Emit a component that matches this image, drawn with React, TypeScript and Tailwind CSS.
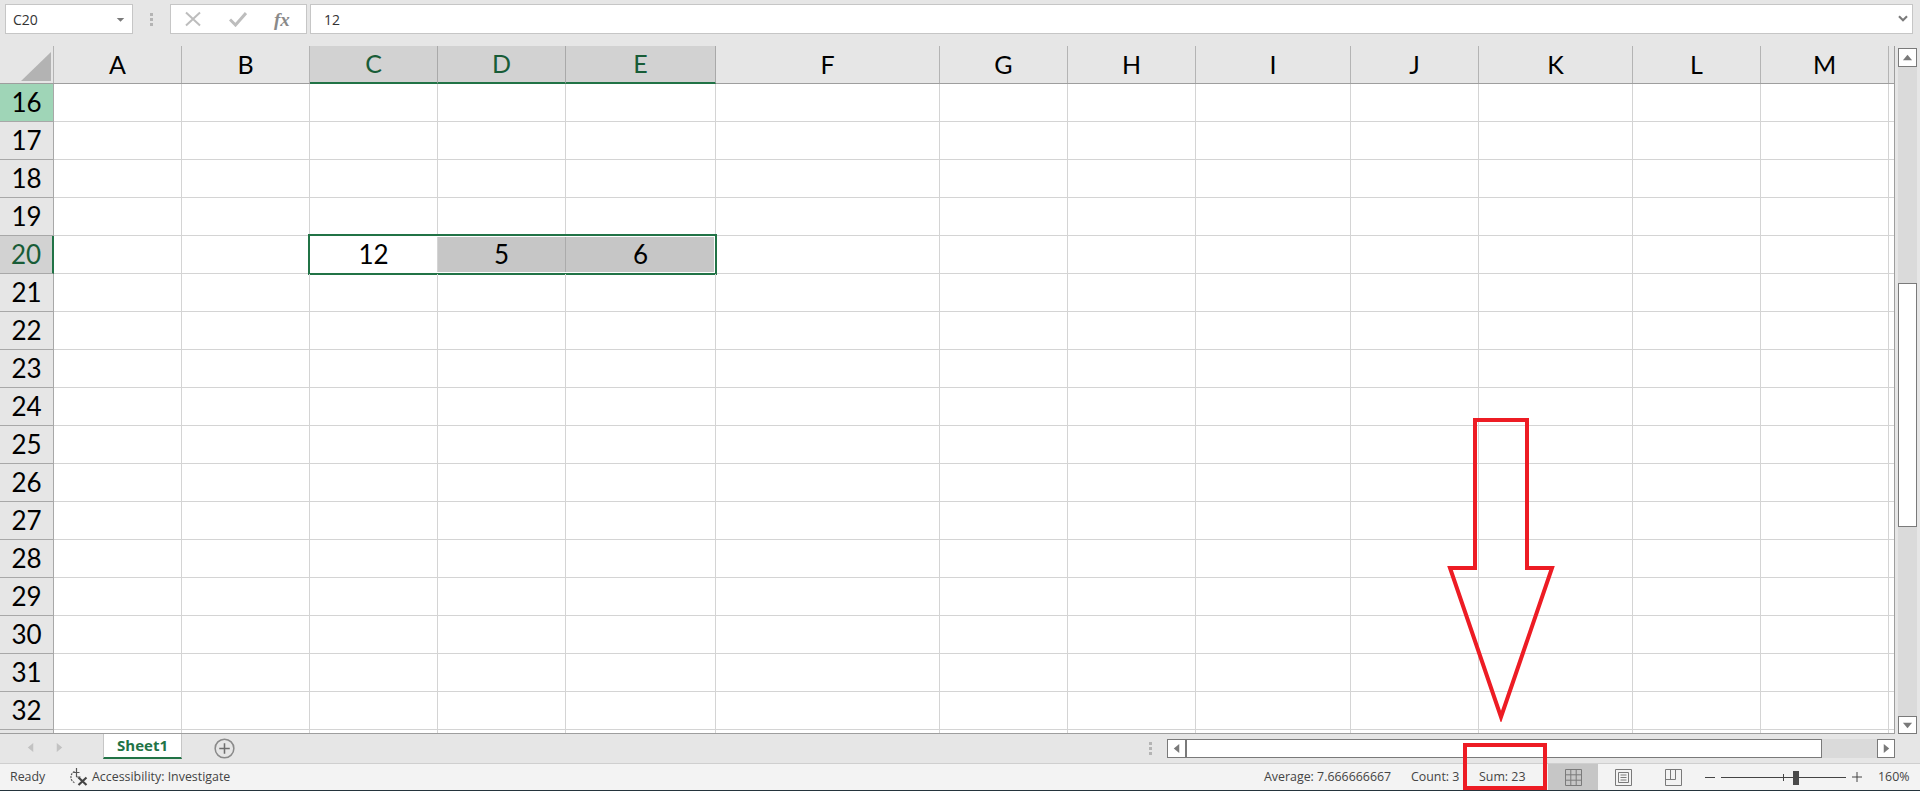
import React from "react";

const columns = [
  { name: "A", width: "w-[128px]" },
  { name: "B", width: "w-[128px]" },
  { name: "C", width: "w-[128px]", selected: true },
  { name: "D", width: "w-[128px]", selected: true },
  { name: "E", width: "w-[150px]", selected: true },
  { name: "F", width: "w-[224px]" },
  { name: "G", width: "w-[128px]" },
  { name: "H", width: "w-[128px]" },
  { name: "I", width: "w-[155px]" },
  { name: "J", width: "w-[128px]" },
  { name: "K", width: "w-[154px]" },
  { name: "L", width: "w-[128px]" },
  { name: "M", width: "w-[128px]" },
];

const rows = [16, 17, 18, 19, 20, 21, 22, 23, 24, 25, 26, 27, 28, 29, 30, 31, 32];
const values: Record<string, string> = { C: "12", D: "5", E: "6" };

function Triangle({ d, className }: { d: string; className: string }) {
  return (
    <svg viewBox="0 0 12 12" className={className}>
      <path d={d} fill="currentColor" />
    </svg>
  );
}

function Grip() {
  return (
    <div className="flex flex-col gap-[2px]">
      <span className="size-[3px] bg-[#b4b4b4]" />
      <span className="size-[3px] bg-[#b4b4b4]" />
      <span className="size-[3px] bg-[#b4b4b4]" />
    </div>
  );
}

function FormulaBar() {
  return (
    <div className="flex h-[46px] items-start pl-[5px] pr-[7px] pt-[4px]">
      <div className="flex h-[30px] w-[128px] items-center justify-between border border-[#c6c6c6] bg-white pl-[7px] pr-[7px] text-[14px] text-[#333]">
        <span>C20</span>
        <Triangle d="M1 4h10L6 9z" className="size-[9px] text-[#7a7a7a]" />
      </div>
      <div className="flex h-[30px] w-[37px] items-center justify-center">
        <Grip />
      </div>
      <div className="flex h-[30px] w-[137px] items-center border border-[#c6c6c6] bg-white pl-[14px]">
        <svg viewBox="0 0 16 16" className="size-[16px]">
          <path d="M1 1.5 15 14.5M15 1.5 1 14.5" stroke="#bdbdbd" strokeWidth="2" fill="none" />
        </svg>
        <svg viewBox="0 0 18 16" className="ml-[28px] h-[16px] w-[18px]">
          <path d="M1 8.5 6.5 14 17 2" stroke="#bdbdbd" strokeWidth="3" fill="none" />
        </svg>
        <span className="ml-[27px] font-['Liberation_Serif',serif] text-[19px] font-bold italic leading-none text-[#8a8a8a]">
          fx
        </span>
      </div>
      <div className="ml-[3px] flex h-[30px] flex-1 items-center justify-between border border-[#c6c6c6] bg-white pl-[13px] pr-[4px] text-[14px] text-[#333]">
        <span>12</span>
        <svg viewBox="0 0 12 10" className="h-[8px] w-[10px]">
          <path d="M1 1.5 6 6.5 11 1.5" stroke="#7a7a7a" strokeWidth="2.6" fill="none" />
        </svg>
      </div>
    </div>
  );
}

function ColumnHeader() {
  return (
    <div className="flex h-[38px] border-b border-[#9e9e9e] font-['Lato',sans-serif] text-[25px] text-black">
      <div className="flex w-[54px] items-end justify-end border-r border-[#b4b4b4] pb-[2px] pr-[2px]">
        <svg viewBox="0 0 30 29" className="h-[29px] w-[30px]">
          <path d="M30 0V29H0z" fill="#b3b3b3" />
        </svg>
      </div>
      {columns.map((c) =>
        c.selected ? (
          <div
            key={c.name}
            className={`${c.width} -mb-px flex items-center justify-center border-r border-b-2 border-r-[#a9a9a9] border-b-[#217346] bg-[#d2d2d2] text-[#185c37]`}
          >
            {c.name}
          </div>
        ) : (
          <div key={c.name} className={`${c.width} flex items-center justify-center border-r border-[#b4b4b4]`}>
            {c.name}
          </div>
        ),
      )}
    </div>
  );
}

function SheetRow({ row }: { row: number }) {
  const active = row === 20;
  return (
    <div className="relative flex h-[38px] border-b border-[#d4d4d4] font-['Lato',sans-serif] text-[26px] text-black">
      <div
        className={
          row === 16
            ? "-mb-px flex w-[54px] items-center justify-center border-b border-r border-[#a8a8a8] bg-[#9fd5b7]"
            : active
              ? "-mb-px flex w-[54px] items-center justify-center border-b border-b-[#a8a8a8] border-r-2 border-r-[#217346] bg-[#d2d2d2] text-[#185c37]"
              : "-mb-px flex w-[54px] items-center justify-center border-b border-r border-[#a8a8a8] bg-[#e6e6e6]"
        }
      >
        {row}
      </div>
      {columns.map((c) => (
        <div
          key={c.name}
          className={
            active && (c.name === "D" || c.name === "E")
              ? `${c.width} flex items-center justify-center border-r border-[#ababab] bg-[#c6c6c6]`
              : `${c.width} flex items-center justify-center border-r border-[#d4d4d4]`
          }
        >
          {active ? values[c.name] : null}
        </div>
      ))}
      {active && (
        <div className="absolute left-[308px] top-[-2px] h-[41px] w-[409px] border-2 border-[#217346]">
          <div className="size-full border border-white" />
        </div>
      )}
    </div>
  );
}

function Sheet() {
  return (
    <div className="w-[1895px] overflow-hidden border-b border-r border-[#9e9e9e]">
      <ColumnHeader />
      <div className="bg-white">
        {rows.map((r) => (
          <SheetRow key={r} row={r} />
        ))}
        <div className="flex h-[3px]">
          <div className="w-[54px] border-r border-[#a8a8a8] bg-[#e6e6e6]" />
          {columns.map((c) => (
            <div key={c.name} className={`${c.width} border-r border-[#d4d4d4]`} />
          ))}
        </div>
      </div>
    </div>
  );
}

function VerticalScroll() {
  return (
    <div className="flex w-[25px] flex-col pl-[3px] pr-[3px] pt-[2px]">
      <div className="flex h-[19px] items-center justify-center border border-[#7a7a7a] bg-white">
        <Triangle d="M1 9 6 3l5 6z" className="size-[11px] text-[#7a7a7a]" />
      </div>
      <div className="flex-1 bg-[#dadada] pt-[216px]">
        <div className="h-[244px] border border-[#7a7a7a] bg-white" />
      </div>
      <div className="flex h-[18px] items-center justify-center border border-[#7a7a7a] bg-white">
        <Triangle d="M1 3h10L6 9z" className="size-[11px] text-[#7a7a7a]" />
      </div>
    </div>
  );
}

function TabBar() {
  return (
    <div className="flex h-[30px] border-b border-[#cfcfcf]">
      <div className="flex w-[103px] items-center pb-[2px] pl-[25px]">
        <Triangle d="M9 1v10L3 6z" className="size-[11px] text-[#c2c2c2]" />
        <Triangle d="M3 1v10l6-5z" className="ml-[18px] size-[11px] text-[#c2c2c2]" />
      </div>
      <div className="flex h-[25px] w-[79px] items-center justify-center border-x border-b-2 border-x-[#c6c6c6] border-b-[#217346] bg-white text-[15px] font-bold text-[#217346]">
        Sheet1
      </div>
      <div className="flex w-[985px] items-start pl-[32px] pt-[4px]">
        <svg viewBox="0 0 22 22" className="size-[21px]">
          <circle cx="11" cy="11" r="9.8" stroke="#8a8a8a" strokeWidth="1.6" fill="none" />
          <path d="M11 5.5v11M5.5 11h11" stroke="#6e6e6e" strokeWidth="1.6" />
        </svg>
      </div>
      <div className="flex w-[0px] items-start pt-[8px]">
        <div className="-ml-[18px]">
          <Grip />
        </div>
      </div>
      <div className="mt-[5px] flex h-[19px] w-[728px]">
        <div className="flex w-[19px] items-center justify-center border border-[#7a7a7a] bg-white">
          <Triangle d="M9 1v10L3 6z" className="size-[11px] text-[#7a7a7a]" />
        </div>
        <div className="w-[636px] border border-[#7a7a7a] bg-white" />
        <div className="w-[55px] bg-[#dadada]" />
        <div className="flex w-[18px] items-center justify-center border border-[#7a7a7a] bg-white">
          <Triangle d="M3 1v10l6-5z" className="size-[11px] text-[#7a7a7a]" />
        </div>
      </div>
    </div>
  );
}

function StatusBar() {
  return (
    <div className="flex h-[27px] items-center border-b border-[#24343c] bg-[#f3f3f3] text-[12.4px] text-[#444]">
      <div className="flex w-[1264px] items-center">
        <span className="w-[69px] pl-[10px]">Ready</span>
        <svg viewBox="0 0 20 18" className="h-[18px] w-[20px]">
          <path d="M5.5 3.5C2.2 5 1.3 9 2.4 11.5c.6 1.4 1.6 2.5 3 3.2" stroke="#555" strokeWidth="1.2" strokeDasharray="2 1" fill="none" />
          <path d="M7.5 0v9M4.5 4.5h6M7.5 9h4" stroke="#555" strokeWidth="1.2" fill="none" />
          <path d="M9.5 9.5 17.5 17M17.5 9.5 9.5 17" stroke="#444" strokeWidth="2.2" fill="none" />
        </svg>
        <span className="ml-[3px]">Accessibility: Investigate</span>
      </div>
      <span className="w-[147px]">Average: 7.666666667</span>
      <span className="w-[68px]">Count: 3</span>
      <span className="w-[69px]">Sum: 23</span>
      <div className="flex h-full w-[50px] items-center justify-center bg-[#c6c6c6]">
        <svg viewBox="0 0 17 17" className="size-[17px]">
          <path d="M.5.5h16v16H.5zM5.8.5v16M11.2.5v16M.5 5.8h16M.5 11.2h16" stroke="#7a7a7a" fill="none" />
        </svg>
      </div>
      <div className="flex h-full w-[50px] items-center justify-center">
        <svg viewBox="0 0 17 17" className="size-[17px]">
          <path d="M.5.5h16v16H.5zM3.5 3.5h10v10h-10zM5.5 6h6M5.5 8.5h6M5.5 11h6" stroke="#7a7a7a" fill="none" />
        </svg>
      </div>
      <div className="flex h-full w-[50px] items-center justify-center">
        <svg viewBox="0 0 17 17" className="size-[17px]">
          <path d="M.5.5h16v16H.5zM.5 10.5h10V.5M5.5.5v10" stroke="#7a7a7a" fill="none" />
        </svg>
      </div>
      <span className="ml-[7px] h-px w-[10px] bg-[#444]" />
      <div className="relative ml-[6px] h-px w-[125px] bg-[#444]">
        <span className="absolute left-[62px] top-[-3px] h-[7px] w-px bg-[#444]" />
        <span className="absolute left-[72px] top-[-6px] h-[14px] w-[6px] bg-[#4a4a4a]" />
      </div>
      <svg viewBox="0 0 10 10" className="ml-[6px] size-[10px]">
        <path d="M0 5h10M5 0v10" stroke="#444" />
      </svg>
      <span className="ml-[16px]">160%</span>
    </div>
  );
}

export default function App() {
  return (
    <div className="relative flex h-[791px] w-[1920px] flex-col overflow-hidden bg-[#e6e6e6] font-['Open_Sans',sans-serif]">
      <FormulaBar />
      <div className="flex h-[688px]">
        <Sheet />
        <VerticalScroll />
      </div>
      <TabBar />
      <StatusBar />

      {/* annotation drawn over the sheet */}
      <svg viewBox="0 0 110 305" className="pointer-events-none absolute left-[1447px] top-[417px] h-[305px] w-[110px]">
        <path
          d="M28 3H80V151H105L54 300 3 151H28Z"
          fill="none"
          stroke="#ed1c24"
          strokeWidth="4"
          strokeLinejoin="miter"
        />
      </svg>
      <div className="pointer-events-none absolute left-[1463px] top-[743px] h-[47px] w-[84px] border-4 border-[#ed1c24]" />
    </div>
  );
}
